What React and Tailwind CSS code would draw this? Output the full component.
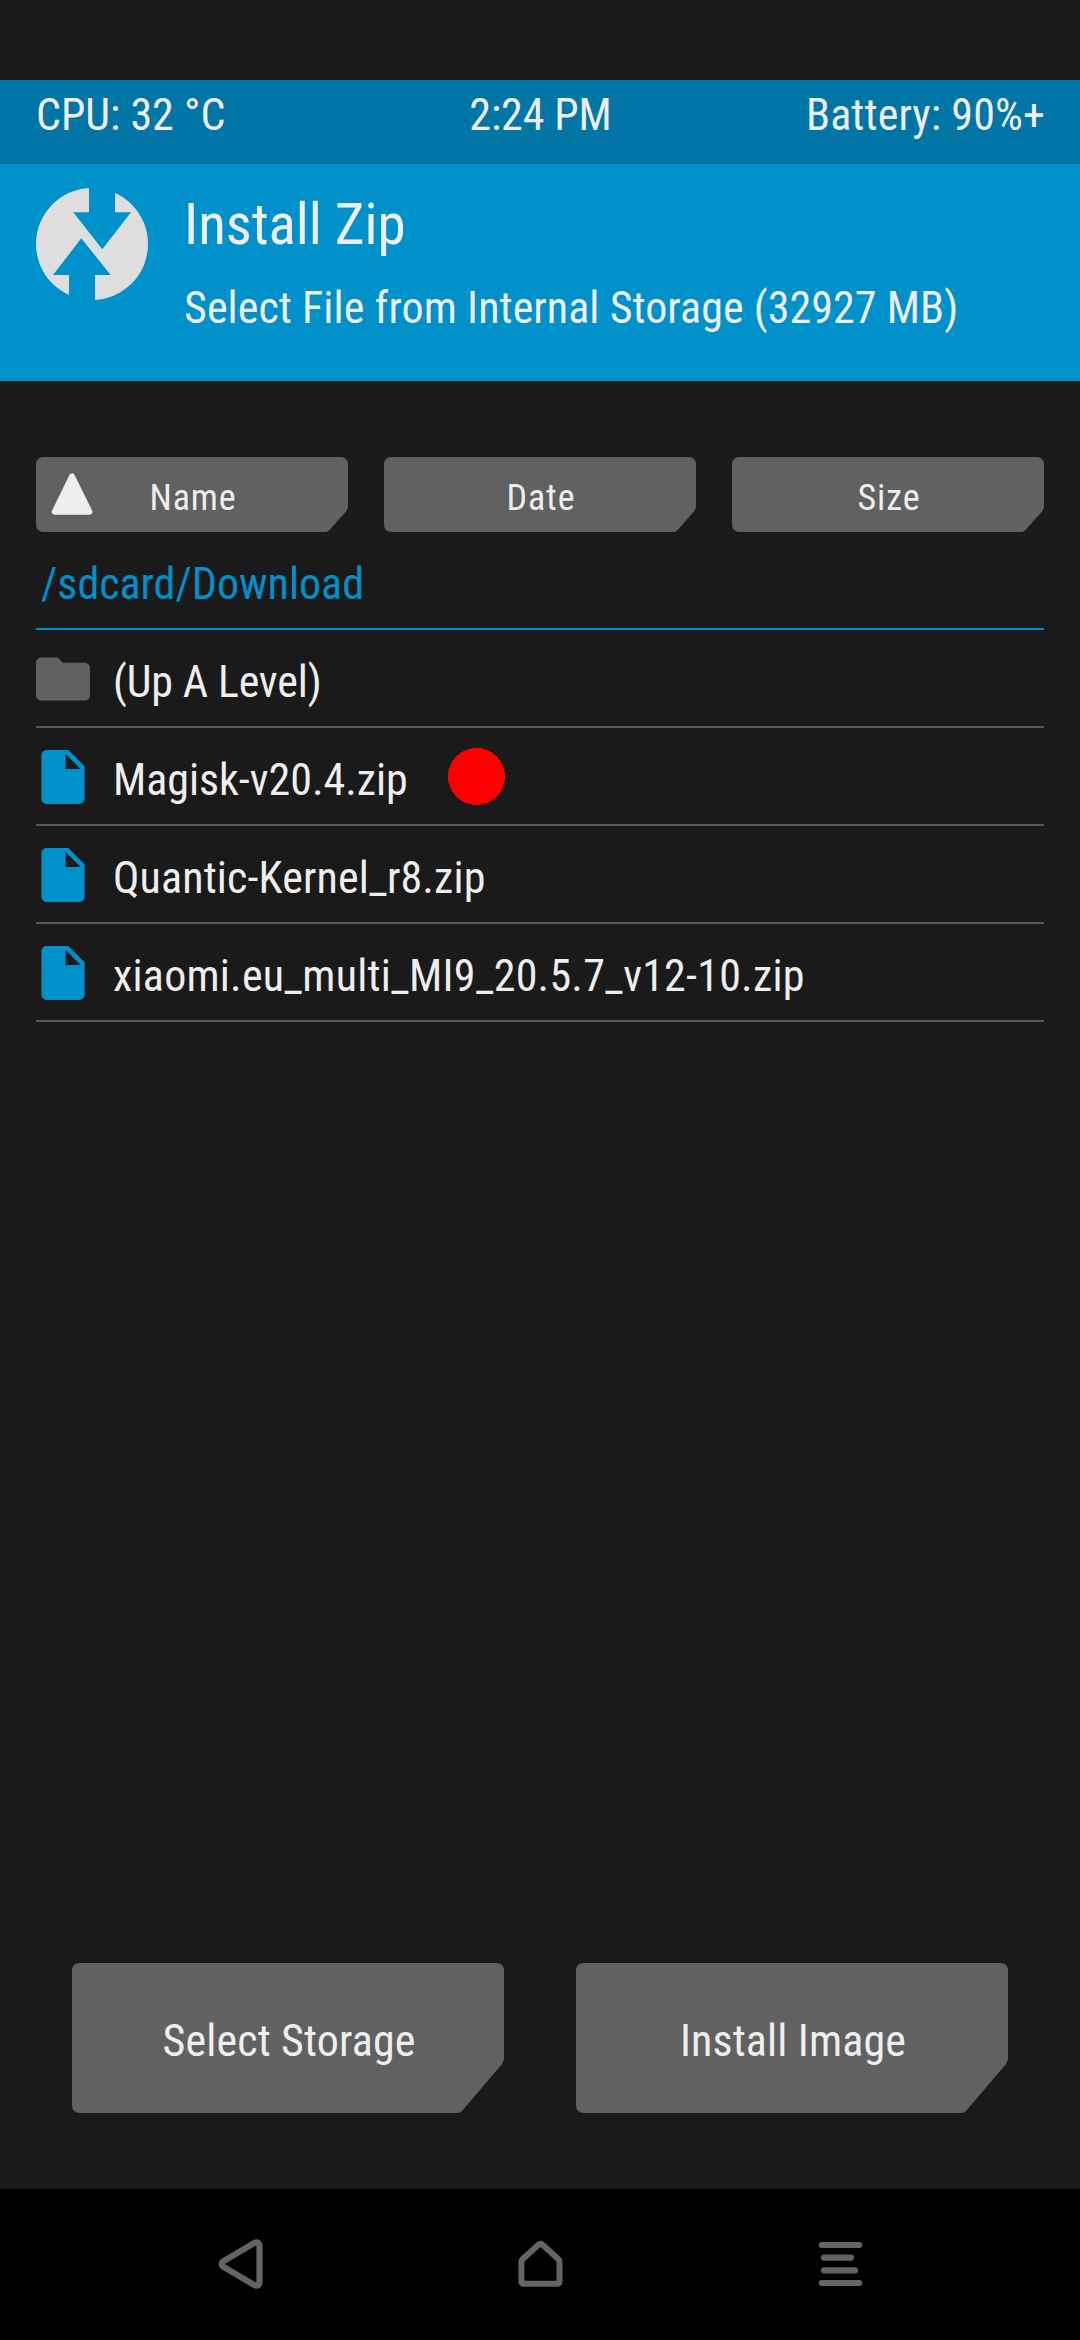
import React from "react";

const FILES = [
  { name: "(Up A Level)", kind: "folder", text: "tracking-[-0.15px]" },
  { name: "Magisk-v20.4.zip", kind: "file", text: "tracking-[-0.03px]", marked: true },
  { name: "Quantic-Kernel_r8.zip", kind: "file", text: "tracking-[0.14px]" },
  { name: "xiaomi.eu_multi_MI9_20.5.7_v12-10.zip", kind: "file", text: "tracking-[0.22px]" },
];

function Logo() {
  return (
    <svg className="size-28 shrink-0" viewBox="0 0 112 112">
      <circle cx="56" cy="56" r="56" fill="#dedede" />
      <path fill="#0090ca" d="M53 -1H79V24.3H95L66.3 61.3L37.3 24.3H53Z" />
      <path fill="#0090ca" d="M33 113V87H17L45.3 50.3L74.7 87H59V113Z" />
    </svg>
  );
}

function FolderIcon() {
  return (
    <svg className="size-[54px] shrink-0" viewBox="2 2 20 20" fill="#616161">
      <path d="M10 4H4c-1.1 0-1.99.9-1.99 2L2 18c0 1.1.9 2 2 2h16c1.1 0 2-.9 2-2V8c0-1.1-.9-2-2-2h-8l-2-2z" />
    </svg>
  );
}

function FileIcon() {
  return (
    <svg className="size-[54px] shrink-0" viewBox="2 2 20 20" fill="#0090ca">
      <path d="M6 2c-1.1 0-1.99.9-1.99 2L4 20c0 1.1.89 2 1.99 2H18c1.1 0 2-.9 2-2V8l-6-6H6zm7 7V3.5L18.5 9H13z" />
    </svg>
  );
}

function SortButton({ label, sorted }) {
  return (
    <button className="relative h-[75px] bg-[#616161] pt-px pl-[2px] text-[36px] leading-9 tracking-[0.9px] [clip-path:path('M8_0H304Q312_0_312_8V49Q312_52_310_54.5L294_72.5Q292_75_289_75H8Q0_75_0_67V8Q0_0_8_0Z')]">
      {sorted && (
        <svg className="absolute top-4 left-[15px] size-[42px]" viewBox="0 0 42 42">
          <path
            d="M21 3.5L3.8 38.8H38.4Z"
            fill="#eeeeee"
            stroke="#eeeeee"
            strokeWidth="6"
            strokeLinejoin="round"
          />
        </svg>
      )}
      <span className="block pt-[5px]">{label}</span>
    </button>
  );
}

function ActionButton({ label }) {
  return (
    <button className="h-[150px] bg-[#616161] pt-[6px] pl-[2px] tracking-[0.15px] [clip-path:path('M8_0H424Q432_0_432_8V95Q432_98.500_430_101L390_148Q388_150_385_150H8Q0_150_0_142V8Q0_0_8_0Z')]">
      {label}
    </button>
  );
}

export default function App() {
  return (
    <div className="flex h-[2340px] w-[1080px] flex-col overflow-hidden bg-[#1a1a1a] pt-20 font-['Roboto_Condensed',Roboto,sans-serif] text-[44px] leading-[44px] whitespace-nowrap text-[#eeeeee]">
      <div className="grid h-[84px] shrink-0 grid-cols-3 bg-[#0075a6] pt-[13px] pr-[35px] pl-9">
        <span>CPU: 32 °C</span>
        <span className="text-center tracking-[-0.1px]">2:24 PM</span>
        <span className="text-right tracking-[0.12px]">Battery: 90%+</span>
      </div>

      <header className="flex h-[217px] shrink-0 gap-9 bg-[#0090ca] pt-6 pl-9">
        <Logo />
        <div className="pt-2">
          <h1 className="text-[57px] leading-[57px] tracking-[-0.07px]">Install Zip</h1>
          <p className="mt-[33px] tracking-[0.07px]">Select File from Internal Storage (32927 MB)</p>
        </div>
      </header>

      <main className="flex-1 px-9 pt-[76px]">
        <div className="grid grid-cols-3 gap-9">
          <SortButton label="Name" sorted />
          <SortButton label="Date" />
          <SortButton label="Size" />
        </div>
        <div className="h-[98px] border-b-2 border-[#0090ca] pt-[30px] pl-[5px] text-[#0090ca]">
          /sdcard/Download
        </div>
        <ul>
          {FILES.map((f) => (
            <li key={f.name} className="relative flex h-[98px] gap-[23px] border-b-2 border-[#5a5a5a] pt-[22px]">
              {f.kind === "folder" ? <FolderIcon /> : <FileIcon />}
              <span className={"pt-2 " + f.text}>{f.name}</span>
              {f.marked && (
                <svg className="absolute top-5 left-[412px] size-[57px]" viewBox="0 0 57 57" shapeRendering="crispEdges">
                  <circle cx="28.5" cy="28.5" r="28.5" fill="#ff0000" />
                </svg>
              )}
            </li>
          ))}
        </ul>
      </main>

      <div className="mb-[76px] grid shrink-0 grid-cols-2 gap-[72px] px-[72px]">
        <ActionButton label="Select Storage" />
        <ActionButton label="Install Image" />
      </div>

      <nav className="grid h-[151px] shrink-0 grid-cols-3 items-center justify-items-center bg-black px-[90px] pb-px">
        <svg className="size-[50px]" viewBox="0 0 50 50" fill="none" stroke="#646464" strokeWidth="6.2">
          <path d="M9 21.8L39 4.2Q44.5 1.5 44.5 8V42Q44.5 48.5 39 45.8L9 28.2Q4.4 25 9 21.8Z" />
        </svg>
        <svg className="size-[50px]" viewBox="0 0 50 50" fill="none" stroke="#646464" strokeWidth="6">
          <path d="M6.4 42V23Q6.4 21.2 8 19.8L23.5 5.8Q25.5 4 27.5 5.8L43 19.8Q44.5 21.2 44.5 23V42Q44.5 44.8 42 44.8H9Q6.4 44.8 6.4 42Z" />
        </svg>
        <svg className="size-[50px]" viewBox="0 0 50 50" fill="#646464">
          <rect x="3.7" y="3" width="43.6" height="6" rx="3" />
          <rect x="6" y="15.5" width="33" height="6.2" rx="3" />
          <rect x="6" y="28.2" width="37" height="6.2" rx="3" />
          <rect x="3.7" y="41" width="43.6" height="6" rx="3" />
        </svg>
      </nav>
    </div>
  );
}
